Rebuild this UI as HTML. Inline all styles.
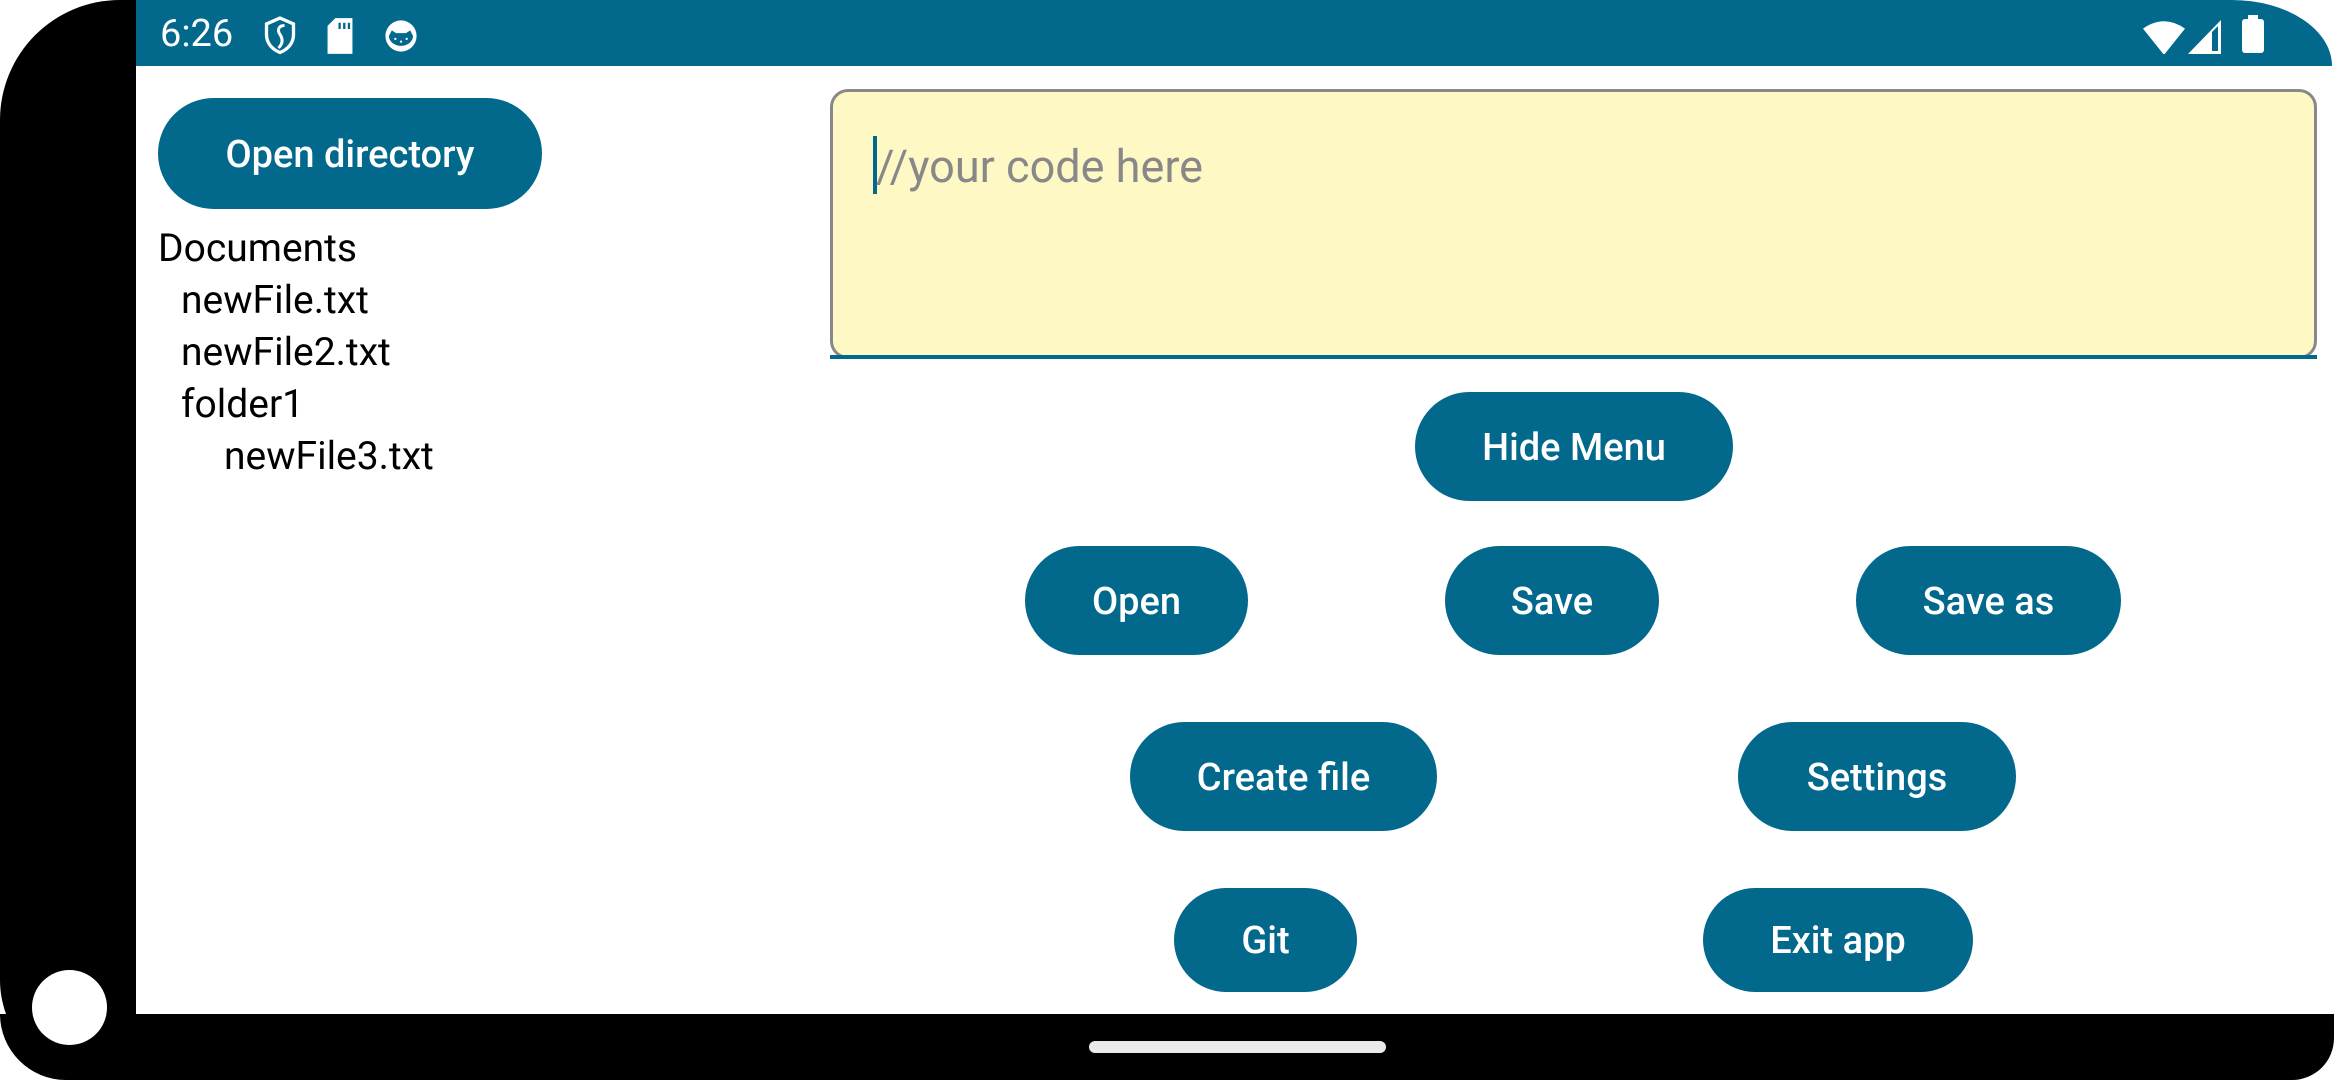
<!DOCTYPE html>
<html><head><meta charset="utf-8"><style>
*{margin:0;padding:0;box-sizing:border-box}
html,body{width:2340px;height:1080px;overflow:hidden;background:#fff;font-family:"Roboto","Liberation Sans",sans-serif}
.abs{position:absolute}
.bez{left:0;top:0;width:180px;height:1080px;background:#000;border-radius:120px 0 0 100px}
.bot{left:0;top:1014px;width:2334px;height:66px;background:#000;border-radius:0 0 70px 110px}
.content{left:136px;top:0;width:2196px;height:1014px;background:#fff;border-top-right-radius:100px}
.status{left:136px;top:0;width:2196px;height:66px;background:#02698d;border-top-right-radius:100px 66px}
.btn{position:absolute;background:#02698d;color:#fff;border-radius:60px;display:flex;align-items:center;justify-content:center;font-size:38px;font-weight:500;padding-top:2px}
.tree{position:absolute;font-size:39px;color:#000;line-height:52px}
</style></head><body>
<div class="abs bez"></div>
<div class="abs bot"></div>
<div class="abs content"></div>
<div class="abs status"></div>
<div class="abs" style="left:32px;top:970px;width:75px;height:75px;border-radius:50%;background:#fff"></div>
<div class="abs" style="left:1089px;top:1041px;width:297px;height:12px;border-radius:6px;background:#eaeaea"></div>

<div class="abs" style="left:160px;top:12px;color:#fff;font-size:38px">6:26</div>
<svg class="abs" style="left:262px;top:16px" width="36" height="40" viewBox="0 0 24 26"><path d="M12 1L3 5v7c0 6 4 10 9 12 5-2 9-6 9-12V5z" fill="none" stroke="#fff" stroke-width="2.2"/><path d="M15 6c-4 0-5 3-3 6s2 6-1 9" fill="none" stroke="#fff" stroke-width="2"/></svg>
<svg class="abs" style="left:326px;top:18px" width="28" height="36" viewBox="0 0 18 23"><path d="M6 0h11v23H1V5z" fill="#fff"/><rect x="8" y="3" width="1.5" height="4" fill="#02698d"/><rect x="11" y="3" width="1.5" height="4" fill="#02698d"/><rect x="14" y="3" width="1.5" height="4" fill="#02698d"/></svg>
<svg class="abs" style="left:384px;top:19px" width="34" height="34" viewBox="0 0 24 24"><circle cx="12" cy="12" r="11" fill="#fff"/><path d="M3.5 12a8.5 7 0 0 0 17 0l-2-4-3 2h-7l-3-2z" fill="#02698d"/><circle cx="8" cy="14" r="0.8" fill="#fff"/><circle cx="12" cy="16" r="0.8" fill="#fff"/><circle cx="16" cy="14" r="0.8" fill="#fff"/></svg>

<svg class="abs" style="left:2143px;top:20px" width="42" height="34" viewBox="0 0 40 32"><path d="M0 8Q20-6 40 8L20 33z" fill="#fff"/></svg>
<svg class="abs" style="left:2188px;top:20px" width="34" height="34" viewBox="0 0 34 34"><path d="M0 34L33 0v34z" fill="#fff"/><path d="M24 12v19h6V6z" fill="#02698d"/></svg>
<div class="abs" style="left:2242px;top:19px;width:22px;height:34px;background:#fff;border-radius:3px"></div>
<div class="abs" style="left:2248px;top:15px;width:10px;height:6px;background:#fff"></div>

<div class="btn" style="left:158px;top:98px;width:384px;height:111px">Open directory</div>
<div class="tree" style="left:158px;top:222px">Documents</div>
<div class="tree" style="left:181px;top:274px">newFile.txt</div>
<div class="tree" style="left:181px;top:326px">newFile2.txt</div>
<div class="tree" style="left:181px;top:378px">folder1</div>
<div class="tree" style="left:224px;top:430px">newFile3.txt</div>

<div class="abs" style="left:830px;top:89px;width:1487px;height:270px;background:#fef8c5;border:3px solid #888;border-radius:18px"></div>
<div class="abs" style="left:830px;top:355px;width:1487px;height:4px;background:#02698d"></div>
<div class="abs" style="left:873px;top:136px;width:4px;height:58px;background:#02698d"></div>
<div class="abs" style="left:876px;top:140px;font-size:45px;color:#888;font-family:'Roboto','Liberation Sans',sans-serif">//your code here</div>

<div class="btn" style="left:1415px;top:392px;width:318px;height:109px">Hide Menu</div>
<div class="btn" style="left:1025px;top:546px;width:223px;height:109px">Open</div>
<div class="btn" style="left:1445px;top:546px;width:214px;height:109px">Save</div>
<div class="btn" style="left:1856px;top:546px;width:265px;height:109px">Save as</div>
<div class="btn" style="left:1130px;top:722px;width:307px;height:109px">Create file</div>
<div class="btn" style="left:1738px;top:722px;width:278px;height:109px">Settings</div>
<div class="btn" style="left:1174px;top:888px;width:183px;height:104px">Git</div>
<div class="btn" style="left:1703px;top:888px;width:270px;height:104px">Exit app</div>
</body></html>
